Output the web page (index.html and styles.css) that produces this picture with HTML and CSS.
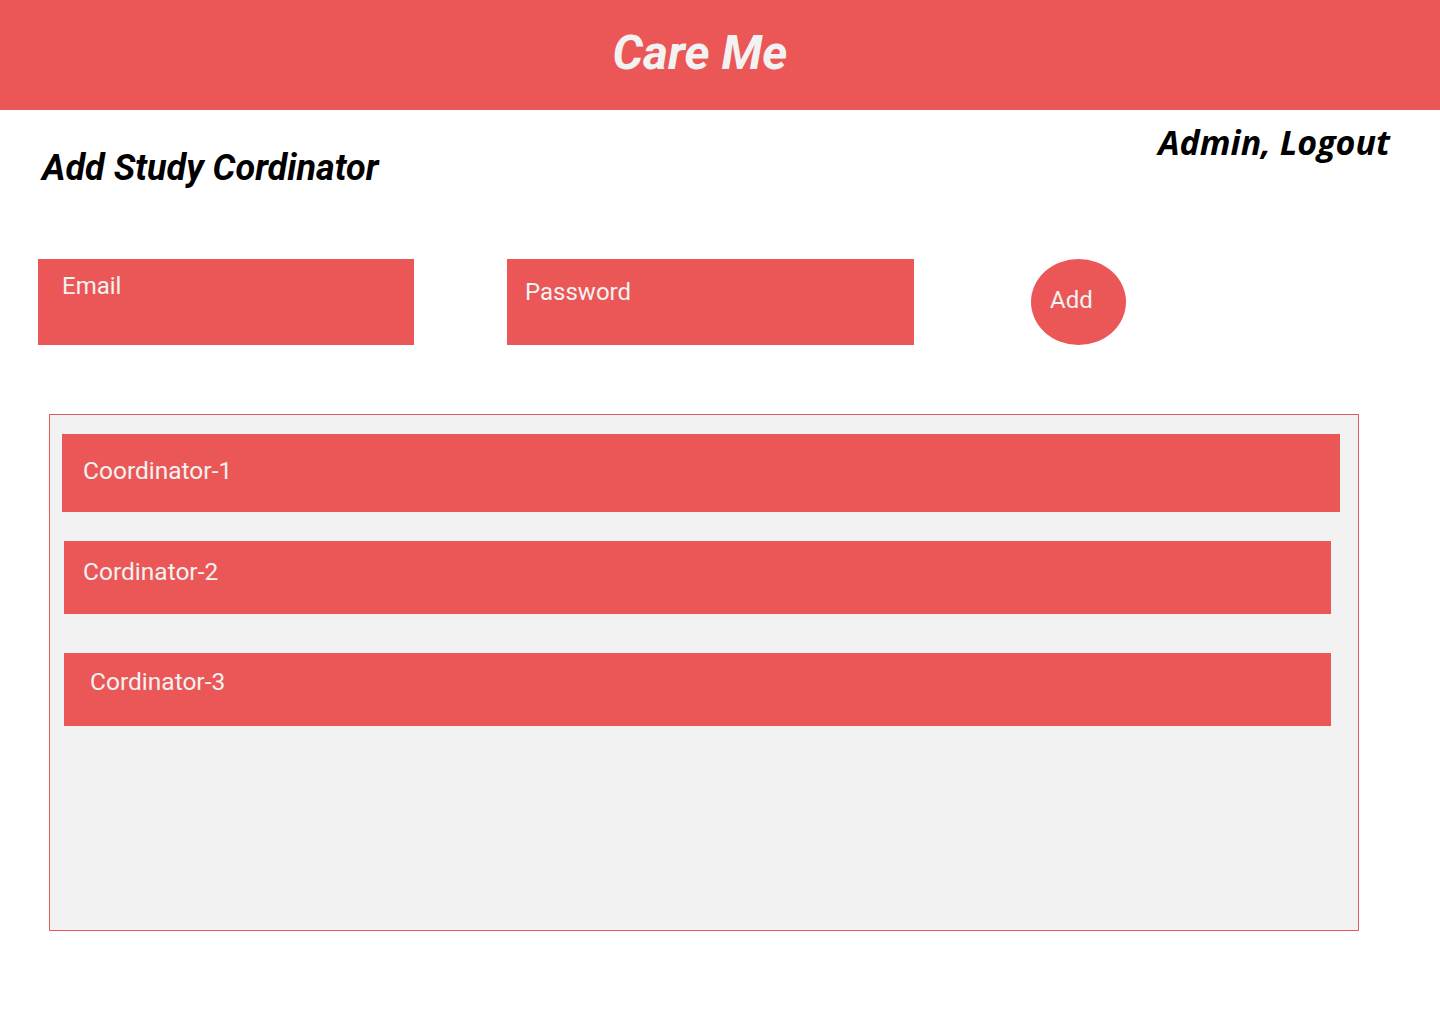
FILE: index.html
```html
<!DOCTYPE html>
<html lang="en">
<head>
<meta charset="utf-8">
<title>Care Me</title>
<link rel="stylesheet" href="styles.css">
</head>
<body>
<header class="topbar">
  <h1 class="brand">Care Me</h1>
</header>
<main class="content">
  <div class="heading-row">
    <h2 class="page-title">Add Study Cordinator</h2>
    <div class="user-links">Admin, Logout</div>
  </div>
  <form class="add-form">
    <div class="field field-email">Email</div>
    <div class="field field-password">Password</div>
    <button type="button" class="add-btn">Add</button>
  </form>
  <section class="list">
    <div class="item item-1">Coordinator-1</div>
    <div class="item item-2">Cordinator-2</div>
    <div class="item item-3">Cordinator-3</div>
  </section>
</main>
</body>
</html>
```
FILE: styles.css
```css
* { box-sizing: border-box; }
html, body { margin: 0; padding: 0; background: #ffffff; }
body { font-family: Roboto, "Liberation Sans", sans-serif; width: 1440px; height: 1024px; overflow: hidden; }

.topbar {
  height: 110px;
  background: #EB5757;
  display: flex;
  justify-content: center;
  align-items: flex-start;
}
.brand {
  margin: 0;
  padding: 29px 40px 0 0;
  font-family: Roboto, sans-serif;
  font-weight: 700;
  font-style: italic;
  font-size: 48px;
  line-height: 1;
  color: #F2F2F2;
}

.heading-row {
  height: 149px;
  display: flex;
  justify-content: space-between;
  align-items: flex-start;
  padding: 0 50px 0 42px;
}
.page-title {
  margin: 40px 0 0 0;
  font-family: Roboto, sans-serif;
  font-weight: 700;
  font-style: italic;
  font-size: 36px;
  line-height: 1;
  color: #000;
}
.user-links {
  margin-top: 15px;
  font-family: "Open Sans", sans-serif;
  font-weight: 700;
  font-style: italic;
  font-size: 34px;
  line-height: 1;
  color: #000;
}

.add-form {
  display: flex;
  height: 86px;
  margin: 0;
  padding-left: 38px;
}
.field, .add-btn {
  height: 86px;
  background: #EB5757;
  color: #F2F2F2;
  font-family: Roboto, sans-serif;
  font-size: 24px;
  line-height: 1;
}
.field-email { width: 376px; padding: 15px 0 0 24px; }
.field-password { width: 407px; margin-left: 93px; padding: 21px 0 0 18px; }
.add-btn {
  width: 95px;
  margin-left: 117px;
  border: 0;
  border-radius: 50%;
  padding: 0 0 4px 19px;
  text-align: left;
  cursor: pointer;
}

.list {
  margin: 69px 0 0 49px;
  width: 1310px;
  height: 517px;
  background: #F2F2F2;
  border: 1px solid #EB5757;
  padding-top: 19px;
}
.item {
  background: #EB5757;
  color: #F2F2F2;
  font-size: 24.5px;
  line-height: 1;
}
.item-1 { width: 1278px; height: 78px; margin-left: 12px; padding: 25px 0 0 21px; }
.item-2 { width: 1267px; height: 73px; margin: 29px 0 0 14px; padding: 19px 0 0 19px; }
.item-3 { width: 1267px; height: 73px; margin: 39px 0 0 14px; padding: 17px 0 0 26px; }
```
